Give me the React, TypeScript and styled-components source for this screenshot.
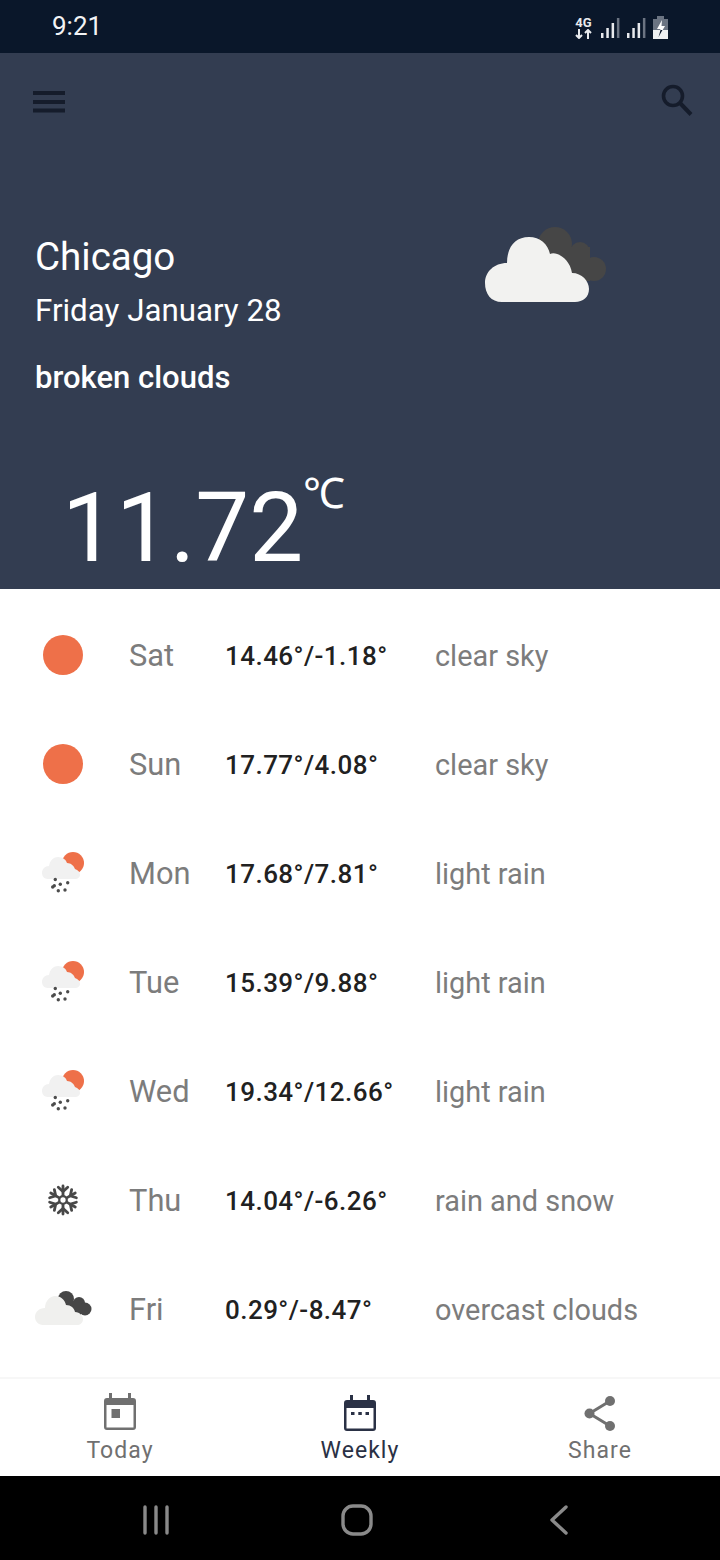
import React from 'react';
import styled, { createGlobalStyle } from 'styled-components';

const Global = createGlobalStyle`
  html, body { margin: 0; padding: 0; background: #fff; }
  body { font-family: Roboto, "Liberation Sans", sans-serif; }
  * { box-sizing: border-box; }
`;

const Page = styled.div`
  width: 720px;
  height: 1560px;
  display: flex;
  flex-direction: column;
  overflow: hidden;
  background: #fff;
`;

const StatusBar = styled.div`
  height: 53px;
  flex: none;
  background: #0a172a;
  display: flex;
  align-items: center;
  justify-content: space-between;
  padding: 0 52px 0 52px;
`;
const Clock = styled.span`
  color: #f2f3f5;
  font-size: 26px;
  line-height: 53px;
`;
const StatusIcons = styled.div`
  display: flex;
  align-items: flex-start;
  gap: 7px;
  padding-top: 2px;
`;
const SignalGroup = styled.div`
  display: flex;
  gap: 7px;
  margin-top: 2px;
`;
const NetBadge = styled.div`
  display: flex;
  flex-direction: column;
  align-items: center;
  width: 17px;
  margin-right: 2px;
  margin-top: 1px;
`;
const NetText = styled.span`
  color: #e8eaed;
  font-size: 13px;
  font-weight: 700;
  line-height: 11px;
  height: 12px;
`;

const Hero = styled.section`
  height: 536px;
  flex: none;
  background: #333d51;
  padding: 27px 25px 0 32px;
  display: flex;
  flex-direction: column;
`;
const TopBar = styled.div`
  display: flex;
  justify-content: space-between;
  align-items: flex-start;
  height: 48px;
`;
const MenuSvg = styled.svg`
  margin-top: 9px;
`;
const SearchSvg = styled.svg`
  margin-top: 2px;
`;
const HeroMain = styled.div`
  display: flex;
  justify-content: space-between;
  margin-top: 104px;
  padding-left: 3px;
`;
const HeroText = styled.div`
  display: flex;
  flex-direction: column;
`;
const City = styled.div`
  color: #fff;
  font-size: 38.5px;
  line-height: 50px;
`;
const DateLine = styled.div`
  color: #fff;
  font-size: 31.3px;
  line-height: 40px;
  margin-top: 9px;
`;
const Condition = styled.div`
  color: #fff;
  font-size: 31px;
  font-weight: 500;
  line-height: 40px;
  margin-top: 27px;
`;
const HeroIcon = styled.div`
  margin: -5px 86px 0 0;
`;
const TempRow = styled.div`
  display: flex;
  align-items: flex-start;
  margin-top: 74px;
  padding-left: 30px;
`;
const Temp = styled.span`
  color: #fff;
  font-size: 96px;
  line-height: 112px;
  font-weight: 400;
`;
const Unit = styled.span`
  color: #fff;
  font-size: 42px;
  line-height: 44px;
  font-weight: 300;
`;

const List = styled.div`
  flex: 1;
  padding-top: 12px;
  display: flex;
  flex-direction: column;
`;
const Row = styled.div`
  height: 109px;
  flex: none;
  display: grid;
  grid-template-columns: 129px 96px 210px 1fr;
  align-items: center;
`;
const IconCell = styled.div`
  display: flex;
  justify-content: center;
  width: 126px;
  margin-top: -1px;
`;
const Day = styled.span`
  color: #7c7c7c;
  font-size: 30.800px;
`;
const Range = styled.span`
  color: #212121;
  font-size: 26px;
  font-weight: 500;
  letter-spacing: 0.45px;
`;
const Desc = styled.span`
  color: #7c7c7c;
  font-size: 28.900px;
`;

const BottomNav = styled.nav`
  height: 99px;
  flex: none;
  display: grid;
  grid-template-columns: repeat(3, 1fr);
  border-top: 2px solid #f7f7f7;
  background: #fff;
`;
const Tab = styled.div<{ $active?: boolean }>`
  display: flex;
  flex-direction: column;
  align-items: center;
  color: ${p => (p.$active ? '#2a3145' : '#707070')};
  padding-top: 13px;
`;
const IconSlot = styled.div`
  height: 38px;
`;
const TabLabel = styled.span`
  font-size: 23px;
  line-height: 28px;
  letter-spacing: 1.05px;
  margin-top: 7px;
`;

const SystemNav = styled.div`
  height: 84px;
  flex: none;
  background: #000;
  display: grid;
  grid-template-columns: 312px 90px 314px;
  align-items: center;
  justify-items: center;
  padding-top: 4px;
`;

const Hamburger = () => (
  <MenuSvg width="34" height="26" viewBox="0 0 34 26">
    <rect x="1" y="2" width="32" height="4" fill="#151c2b" />
    <rect x="1" y="11" width="32" height="4" fill="#151c2b" />
    <rect x="1" y="19.500" width="32" height="4" fill="#151c2b" />
  </MenuSvg>
);
const Search = () => (
  <SearchSvg width="36" height="36" viewBox="0 0 36 36" fill="none" stroke="#151c2b">
    <circle cx="14" cy="14" r="9.500" strokeWidth="3.600" />
    <path d="M21 21L32 32.500" strokeWidth="4" />
  </SearchSvg>
);

const BigCloud = () => (
  <svg width="124" height="76" viewBox="0 0 124 76">
    <g fill="#464646">
      <circle cx="70" cy="17" r="17" />
      <circle cx="95" cy="25" r="10" />
      <circle cx="109" cy="42" r="12" />
      <path d="M70 20h35v34H70z" />
    </g>
    <path
      fill="#f2f2f0"
      d="M17 75C6 75 0 67 0 56C0 45 9 36 22 36C22 20 30 10 44 10C55 10 63 17 65 27C72 24 85 32 87 46C97 46 104 54 104 62C104 70 98 75 90 75Z"
    />
  </svg>
);

const SmallDarkCloud = () => (
  <svg width="57" height="36" viewBox="0 0 57 36">
    <g fill="#464646">
      <circle cx="31" cy="8" r="8" />
      <circle cx="44" cy="12" r="6" />
      <circle cx="50" cy="18" r="6.500" />
      <path d="M30 10h16v14H30z" />
    </g>
    <path
      fill="#f0f0ee"
      d="M8 34C3 34 0 30 0 26C0 21 4 17 10 17C10 10 15 5 20 5C26 5 30 9 31 14C36 14 39 17 40 21C45 21 48 25 48 28C48 32 45 34 42 34Z"
    />
  </svg>
);

const Sun = () => (
  <svg width="40" height="40" viewBox="0 0 40 40">
    <circle cx="20" cy="20" r="20" fill="#ee7049" />
  </svg>
);

const RainIcon = () => (
  <svg width="42" height="42" viewBox="0 0 42 42">
    <circle cx="31" cy="11" r="11" fill="#ee7049" />
    <path
      fill="#f1f1f1"
      d="M6 27C2 27 0 24 0 21C0 17 3 14 7 14C8 8 12 5 16 5C21 5 24 8 25 11C29 11 32 14 33 17C36 18 38 20 38 23C38 25 36 27 33 27Z"
    />
    <g fill="#4c4c4c">
      <circle cx="13.300" cy="27.500" r="1.700" />
      <circle cx="12.300" cy="33.700" r="1.700" />
      <circle cx="18.300" cy="32.300" r="1.700" />
      <circle cx="25.700" cy="30.700" r="1.700" />
      <circle cx="10.700" cy="35" r="1.700" />
      <circle cx="16.300" cy="38.700" r="1.700" />
      <circle cx="23" cy="38" r="1.700" />
    </g>
  </svg>
);

const Snow = () => (
  <svg width="32" height="34" viewBox="0 0 34 34" fill="none" stroke="#484848" strokeWidth="3" strokeLinecap="round">
    {[0, 60, 120].map(a => (
      <g key={a} transform={`rotate(${a} 17 17)`}>
        <path d="M17 2V12M17 22V32" />
        <path d="M12 3.500L17 8L22 3.500M12 30.500L17 26L22 30.500" />
      </g>
    ))}
    <circle cx="17" cy="17" r="4" strokeWidth="2.400" />
  </svg>
);

const CalendarToday = () => (
  <svg width="32" height="38" viewBox="0 0 32 38" fill="currentColor">
    <path
      fillRule="evenodd"
      d="M5 1h3v5h16V1h3v5h2a3 3 0 0 1 3 3v26a3 3 0 0 1-3 3H3a3 3 0 0 1-3-3V9a3 3 0 0 1 3-3h2zM2.500 13v22.500h27V13zM7.500 17h8.500v9H7.500z"
    />
  </svg>
);
const CalendarWeek = () => (
  <svg width="32" height="39" viewBox="0 0 32 39" fill="currentColor">
    <path
      fillRule="evenodd"
      d="M6 3h3v5h14V3h3v5h3a3 3 0 0 1 3 3v25a3 3 0 0 1-3 3H3a3 3 0 0 1-3-3V11a3 3 0 0 1 3-3h3zM2.500 16v20.500h27V16zM7 20h3.500v3H7zM14.300 20h3.500v3h-3.500zM21.500 20h3.500v3h-3.500z"
    />
  </svg>
);
const ShareIcon = () => (
  <svg width="34" height="39" viewBox="0 0 34 39" fill="currentColor" stroke="currentColor">
    <circle cx="27" cy="9" r="5" stroke="none" />
    <circle cx="6.500" cy="21.500" r="5" stroke="none" />
    <circle cx="27" cy="34" r="5" stroke="none" />
    <path d="M27 9L6.500 21.500L27 34" fill="none" strokeWidth="3" />
  </svg>
);

const Signal = () => (
  <svg width="19" height="20" viewBox="0 0 19 20">
    {[15, 10, 5, 0].map((y, i) => (
      <rect key={y} x={i * 5.3} y={y} width="2.500" height={20 - y} fill={i < 3 ? '#e8eaed' : '#6b7482'} />
    ))}
  </svg>
);
const Battery = () => (
  <svg width="15" height="23" viewBox="0 0 15 23">
    <path d="M4 0h7v3h4v20H0V3h4z" fill="#6b7482" />
    <path d="M0 14h15v9H0z" fill="#eef0f2" />
    <path d="M9 4L4 13h3.500L5.500 21L12 10H8.500z" fill="#fff" />
    <path d="M4.500 14h3L5.500 21L9.500 14z" fill="#0a172a" />
  </svg>
);
const NetArrows = () => (
  <svg width="17" height="10" viewBox="0 0 17 10" fill="none" stroke="#e8eaed" strokeWidth="2">
    <path d="M4 0v9M1 6l3 3 3-3M13 10V1M10 4l3-3 3 3" />
  </svg>
);

const Menu = () => (
  <svg width="30" height="30" viewBox="0 0 30 30" fill="none" stroke="#8a8a8a" strokeWidth="3.400" strokeLinecap="round" strokeLinejoin="round">
    <path d="M4 2V28M15 2V28M26 2V28" />
  </svg>
);
const Home = () => (
  <svg width="32" height="32" viewBox="0 0 32 32" fill="none" stroke="#8a8a8a" strokeWidth="3.400">
    <rect x="2" y="2" width="28" height="28" rx="10" />
  </svg>
);
const Back = () => (
  <svg width="20" height="32" viewBox="0 0 20 32" fill="none" stroke="#8a8a8a" strokeWidth="3.400" strokeLinecap="round" strokeLinejoin="round">
    <path d="M17 3L3 16L17 29" />
  </svg>
);

const days: { icon: React.ReactNode; day: string; range: string; desc: string }[] = [
  { icon: <Sun />, day: 'Sat', range: '14.46°/-1.18°', desc: 'clear sky' },
  { icon: <Sun />, day: 'Sun', range: '17.77°/4.08°', desc: 'clear sky' },
  { icon: <RainIcon />, day: 'Mon', range: '17.68°/7.81°', desc: 'light rain' },
  { icon: <RainIcon />, day: 'Tue', range: '15.39°/9.88°', desc: 'light rain' },
  { icon: <RainIcon />, day: 'Wed', range: '19.34°/12.66°', desc: 'light rain' },
  { icon: <Snow />, day: 'Thu', range: '14.04°/-6.26°', desc: 'rain and snow' },
  { icon: <SmallDarkCloud />, day: 'Fri', range: '0.29°/-8.47°', desc: 'overcast clouds' },
];

export default function App() {
  return (
    <Page>
      <Global />
      <StatusBar>
        <Clock>9:21</Clock>
        <StatusIcons>
          <NetBadge>
            <NetText>4G</NetText>
            <NetArrows />
          </NetBadge>
          <SignalGroup>
            <Signal />
            <Signal />
          </SignalGroup>
          <Battery />
        </StatusIcons>
      </StatusBar>
      <Hero>
        <TopBar>
          <Hamburger />
          <Search />
        </TopBar>
        <HeroMain>
          <HeroText>
            <City>Chicago</City>
            <DateLine>Friday January 28</DateLine>
            <Condition>broken clouds</Condition>
          </HeroText>
          <HeroIcon>
            <BigCloud />
          </HeroIcon>
        </HeroMain>
        <TempRow>
          <Temp>11.72</Temp>
          <Unit>℃</Unit>
        </TempRow>
      </Hero>
      <List>
        {days.map(d => (
          <Row key={d.day}>
            <IconCell>{d.icon}</IconCell>
            <Day>{d.day}</Day>
            <Range>{d.range}</Range>
            <Desc>{d.desc}</Desc>
          </Row>
        ))}
      </List>
      <BottomNav>
        <Tab>
          <IconSlot><CalendarToday /></IconSlot>
          <TabLabel>Today</TabLabel>
        </Tab>
        <Tab $active>
          <IconSlot><CalendarWeek /></IconSlot>
          <TabLabel>Weekly</TabLabel>
        </Tab>
        <Tab>
          <IconSlot><ShareIcon /></IconSlot>
          <TabLabel>Share</TabLabel>
        </Tab>
      </BottomNav>
      <SystemNav>
        <Menu />
        <Home />
        <Back />
      </SystemNav>
    </Page>
  );
}
